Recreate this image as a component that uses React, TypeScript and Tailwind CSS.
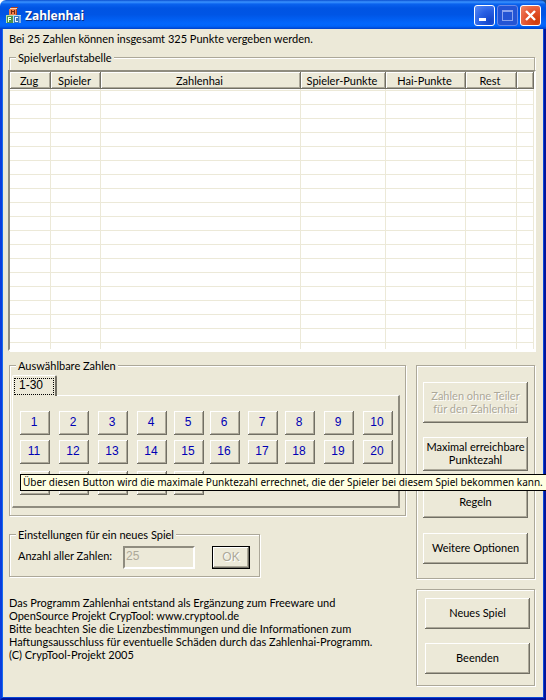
import type { ReactNode } from "react";

const ETCHED =
  "min-w-0 border border-[#aca899] shadow-[1px_1px_#fff,inset_1px_1px_#fff]";
const RAISED =
  "bg-[#ece9d8] shadow-[inset_-1px_-1px_#716f64,inset_1px_1px_#fff,inset_-2px_-2px_#aca899]";
const FIGURES = "font-['Liberation_Sans',Arial,sans-serif] text-[12px]";

const columns = ["Zug", "Spieler", "Zahlenhai", "Spieler-Punkte", "Hai-Punkte", "Rest", ""];
const rows = Array.from({ length: 20 }, (_, i) => i);
const numbers = Array.from({ length: 25 }, (_, i) => i + 1);

function BlocksIcon() {
  return (
    <svg width="16" height="16" viewBox="0 0 16 16" shapeRendering="crispEdges" aria-hidden="true">
      <path d="M3 2l2-2h7l-1 2v6H3z" fill="#a84020" />
      <path d="M3 2h7v6H3z" fill="#f0804c" />
      <path d="M4 1h7l-1 1H3z" fill="#ffd0a8" />
      <path d="M5 3h1v4H5zM8 3h1v4H8zM6 4h2v1H6z" fill="#702810" />
      <path d="M0 8h7v8H0z" fill="#4c9450" />
      <path d="M0 8h7v1H0zM0 9h1v7H0z" fill="#b4e0a8" />
      <path d="M2 10h3v1H3v1h2v1H3v2H2z" fill="#f0fff0" />
      <path d="M7 8h8v8H7z" fill="#3878c0" />
      <path d="M7 8h8v1H7zM7 9h1v7H7z" fill="#b0dcf8" />
      <path d="M13 9h2v7h-2z" fill="#88b0dc" />
      <path d="M9 10h3v1h-2v3h2v1H9z" fill="#f0faff" />
    </svg>
  );
}

function PushButton({ className = "", children, disabled }: { className?: string; children: ReactNode; disabled?: boolean }) {
  return (
    <button
      type="button"
      disabled={disabled}
      className={`${RAISED} w-full shrink-0 pb-[2px] text-center disabled:text-[#aca899] disabled:[text-shadow:1px_1px_#fff] ${className}`}
    >
      {children}
    </button>
  );
}

function TitleBar() {
  return (
    <header className="flex h-[29px] items-center rounded-t-md bg-[linear-gradient(180deg,#0a4fd0_0%,#3a93ff_7%,#0a62ee_14%,#0054e3_28%,#0055e5_50%,#0266fc_80%,#0064fa_90%,#0040c8_100%)] pr-[5px] pl-[6px]">
      <BlocksIcon />
      <h1 className="ml-[3px] flex-1 pt-[2px] font-['Noto_Sans','Open_Sans',sans-serif] text-[12px] leading-[18px] font-bold text-white [text-shadow:1px_1px_#0a2a80]">
        Zahlenhai
      </h1>
      <div className="flex gap-[2px] pt-[2px]">
        <button
          type="button"
          aria-label="Minimieren"
          className="size-[21px] rounded-[3px] border border-white bg-[radial-gradient(circle_at_80%_80%,#1444c8,#2860e4_50%,#5c8cf4)]"
        >
          <svg viewBox="0 0 19 19" className="block" shapeRendering="crispEdges">
            <path d="M4 12h7v3H4z" fill="#fff" />
          </svg>
        </button>
        <button
          type="button"
          disabled
          aria-label="Maximieren"
          className="size-[21px] rounded-[3px] border border-[#6a8ae8] bg-[#2454d4]"
        >
          <svg viewBox="0 0 19 19" className="block" shapeRendering="crispEdges">
            <path d="M4 4h11v11H4zM5 6v8h9V6z" fill="#8ba4ee" fillRule="evenodd" />
          </svg>
        </button>
        <button
          type="button"
          aria-label="Schließen"
          className="size-[21px] rounded-[3px] border border-white bg-[radial-gradient(circle_at_80%_80%,#d03c08,#e45430_50%,#f08868)]"
        >
          <svg viewBox="0 0 19 19" className="block">
            <path d="M5 5l9 9M14 5l-9 9" stroke="#fff" strokeWidth="2.4" />
          </svg>
        </button>
      </div>
    </header>
  );
}

function HistoryTable() {
  return (
    <div className="-mx-[2px] h-[281px] overflow-hidden border-2 border-t-[#8f8c7f] border-r-white border-b-white border-l-[#8f8c7f] bg-white">
      <table className="w-full table-fixed border-separate border-spacing-0">
        <colgroup>
          <col className="w-[41px]" />
          <col className="w-[50px]" />
          <col />
          <col className="w-[85px]" />
          <col className="w-[80px]" />
          <col className="w-[51px]" />
          <col className="w-[17px]" />
        </colgroup>
        <thead>
          <tr>
            {columns.map((c, i) => (
              <th key={i} scope="col" className={`${RAISED} h-[17px] pt-0 pr-[3px] pb-0 pl-0 text-center leading-[17px] font-normal whitespace-nowrap`}>
                {c}
              </th>
            ))}
          </tr>
        </thead>
        <tbody>
          {rows.map((r) => (
            <tr key={r}>
              {columns.map((_, i) => (
                <td
                  key={i}
                  className={`${r === 0 ? "h-[2px]" : "h-[14px]"} border-r border-b border-[#ece9d8] p-0`}
                />
              ))}
            </tr>
          ))}
        </tbody>
      </table>
    </div>
  );
}

function NumberPicker() {
  return (
    <fieldset className={`${ETCHED} pt-[3px] pr-[5px] pb-[7px] pl-[2px]`}>
      <legend className="ml-[4px] bg-[#ece9d8] px-[2px]">Auswählbare Zahlen</legend>
      <div role="tablist" className="flex h-[20px]">
        <button
          type="button"
          role="tab"
          aria-selected="true"
          className="relative z-10 -mb-px w-[45px] rounded-t-[2px] border-t border-r-2 border-l border-t-white border-r-[#716f64] border-l-white bg-[#ece9d8] p-px"
        >
          <span className={`${FIGURES} block h-[17px] border border-dotted border-black pl-[4px] text-left leading-[13px]`}>1-30</span>
        </button>
      </div>
      <div
        role="tabpanel"
        className="grid grid-cols-[39fr_39fr_39fr_37fr_36fr_38fr_37fr_39fr_39fr_30fr] grid-rows-[29px_31px_24px] border-t border-r-2 border-b-2 border-l border-t-white border-r-[#8f8c7f] border-b-[#8f8c7f] border-l-white pt-[15px] pr-[5px] pb-[11px] pl-[7px]"
      >
        {numbers.map((n) => (
          <button
            key={n}
            type="button"
            aria-label={String(n)}
            className={`${RAISED} ${FIGURES} h-[24px] w-[30px] pr-[2px] pb-[2px] text-center text-[#0000b4]`}
          >
            {n <= 20 ? n : null}
          </button>
        ))}
      </div>
    </fieldset>
  );
}

function NewGameSettings() {
  return (
    <fieldset className={`${ETCHED} mt-[12px] w-[251px] pt-[5px] pb-[7px] pl-[8px]`}>
      <legend className="-ml-[2px] bg-[#ece9d8] px-[2px]">Einstellungen für ein neues Spiel</legend>
      <div className="flex items-center">
        <label htmlFor="count" className="w-[105px] pb-[4px]">
          Anzahl aller Zahlen:
        </label>
        <input
          id="count"
          disabled
          defaultValue="25"
          className={`${FIGURES} h-[23px] w-[72px] border-2 border-t-[#8f8c7f] border-r-white border-b-white border-l-[#8f8c7f] bg-[#ece9d8] px-px pb-[3px] text-[#aca899]`}
        />
        <button
          type="button"
          disabled
          className={`${FIGURES} ml-[17px] h-[23px] w-[38px] border border-black bg-[#ece9d8] text-center text-[#aca899] shadow-[inset_-1px_-1px_#716f64,inset_1px_1px_#fff,inset_-2px_-2px_#aca899] [text-shadow:1px_1px_#fff]`}
        >
          OK
        </button>
      </div>
    </fieldset>
  );
}

export default function App() {
  return (
    <div className="relative overflow-hidden bg-[linear-gradient(90deg,#fff_50%,#1c4a8c_50%)] font-[Lato,'Liberation_Sans',sans-serif] text-[11px] leading-[13px] text-black">
      <TitleBar />
      <div className="border-x-2 border-b-2 border-r-[#00169c] border-b-[#00169c] border-l-[#0a3cdc]">
        <main className="border-x border-b border-r-[#0a48d8] border-b-[#0a48d8] border-l-[#166aee] bg-[#ece9d8] pt-[3px] pr-[8px] pb-[11px] pl-[6px]">
          <p>Bei 25 Zahlen können insgesamt 325 Punkte vergeben werden.</p>
          <fieldset className={`${ETCHED} mt-[6px] border-b-0 pt-[6px]`}>
            <legend className="ml-[6px] bg-[#ece9d8] px-[2px]">Spielverlaufstabelle</legend>
            <HistoryTable />
          </fieldset>

          <div className="mt-[8px] flex gap-[10px]">
            <div className="min-w-0 flex-1">
              <NumberPicker />
              <NewGameSettings />
              <p className="mt-[19px]">
                Das Programm Zahlenhai entstand als Ergänzung zum Freeware und
                <br />
                OpenSource Projekt CrypTool: www.cryptool.de
                <br />
                Bitte beachten Sie die Lizenzbestimmungen und die Informationen zum
                <br />
                Haftungsausschluss für eventuelle Schäden durch das Zahlenhai-Programm.
                <br />
                (C) CrypTool-Projekt 2005
              </p>
            </div>

            <aside className="flex w-[119px] shrink-0 flex-col gap-[10px] pt-[6px]">
              <div className={`${ETCHED} flex flex-col px-[6px] pt-[16px] pb-[14px]`}>
                <PushButton disabled className="h-[41px]">
                  Zahlen ohne Teiler
                  <br />
                  für den Zahlenhai
                </PushButton>
                <PushButton className="mt-[14px] h-[34px]">
                  Maximal erreichbare
                  <br />
                  Punktezahl
                </PushButton>
                <PushButton className="mt-[16px] h-[31px]">Regeln</PushButton>
                <PushButton className="mt-[15px] h-[31px]">Weitere Optionen</PushButton>
              </div>
              <div className={`${ETCHED} flex flex-col gap-[14px] pt-[8px] pr-[4px] pb-[11px] pl-[8px]`}>
                <PushButton className="h-[31px]">Neues Spiel</PushButton>
                <PushButton className="h-[31px]">Beenden</PushButton>
              </div>
            </aside>
          </div>
        </main>
      </div>

      <div
        role="tooltip"
        className="absolute top-[474px] right-0 left-[20px] z-20 border-y border-l border-black bg-[#ffffe1] pl-[2px] font-['Noto_Sans','Liberation_Sans',sans-serif] text-[10px] leading-[15px] whitespace-nowrap"
      >
        Über diesen Button wird die maximale Punktezahl errechnet, die der Spieler bei diesem Spiel bekommen kann.
      </div>
    </div>
  );
}
